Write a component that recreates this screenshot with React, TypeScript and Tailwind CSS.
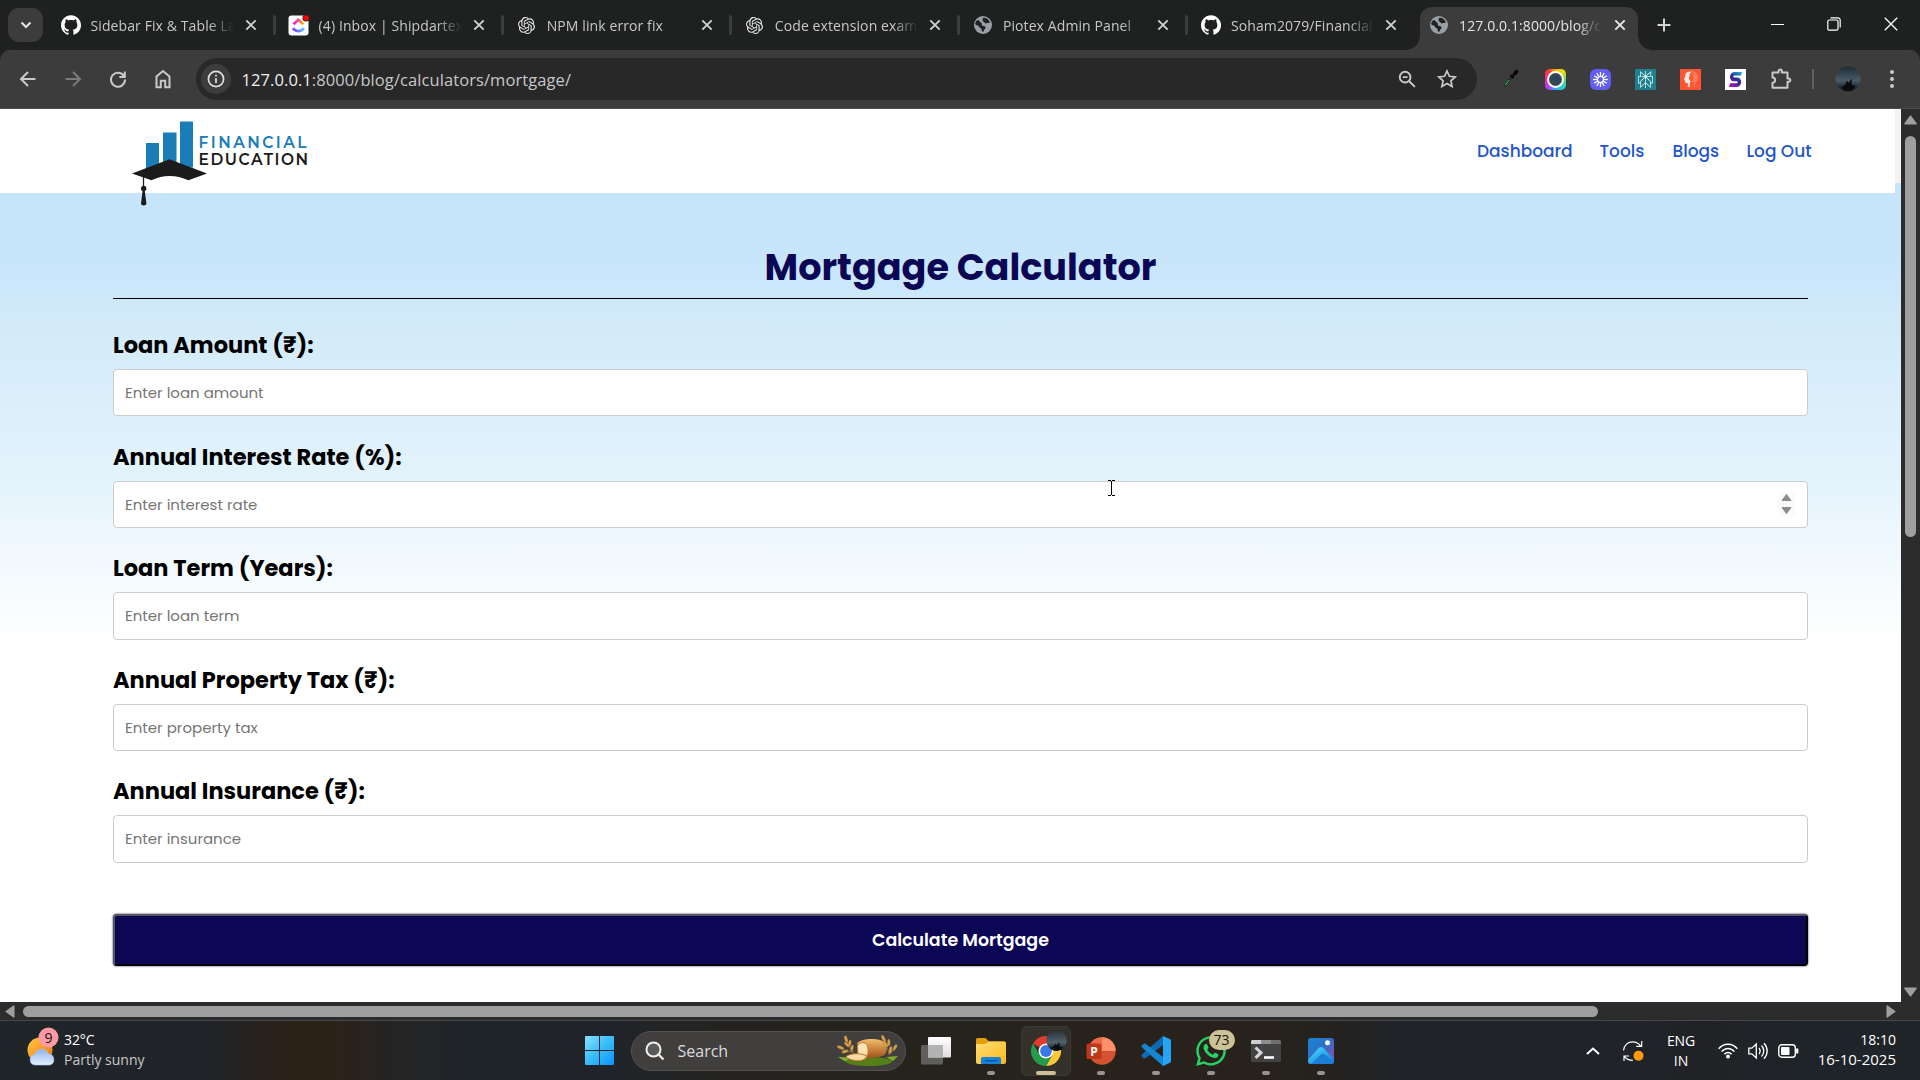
import type { ReactNode } from "react";
import { SiGithub, SiOpenai, SiPerplexity } from "react-icons/si";
import { FaWhatsapp } from "react-icons/fa";

const POPPINS = "font-[Poppins,Inter,sans-serif]";

/* ---------- tab strip ---------- */

function Globe() {
  return (
    <svg viewBox="0 0 20 20" className="size-5">
      <circle cx="10" cy="10" r="9" fill="#9aa0a6" />
      <path d="M4 5.500c1.200-.6 2.500 0 2.800 1 .3 1 1.700.8 2 1.900.2 1-.6 1.700.4 2.200 1.400.7 3.100.5 3.300 1.900.2 1.300-1.300 1.600-1.600 2.900-.2 1-1 1.700-1.800 1.100-.7-.6-.2-2-.9-2.900-.8-1-2.200-1.100-2.600-2.400C5.200 9.900 3 10.600 2.300 9.300 2 8 2.800 6.500 4 5.500z" fill="#202222" />
      <path d="M10.500 2.800c1.900-.4 4.200.8 5 2.300.5 1 1.500 1.700 1 2.600-.6.8-1.600-.1-2.500.3-.9.500-1.900.6-2.300-.3-.3-.9-1.600-.8-1.900-1.800-.3-1.200-.3-2.700.7-3.100z" fill="#202222" />
    </svg>
  );
}

function ClickUpIcon() {
  return (
    <svg viewBox="0 0 21 21" className="size-[21px] overflow-visible">
      <defs>
        <linearGradient id="cuTop" x1="0" x2="1"><stop offset="0" stopColor="#ff02f0" /><stop offset="1" stopColor="#ffb000" /></linearGradient>
        <linearGradient id="cuBot" x1="0" x2="1"><stop offset="0" stopColor="#8930fd" /><stop offset="1" stopColor="#49ccf9" /></linearGradient>
      </defs>
      <rect x="0.500" y="0.500" width="20" height="20" rx="3" fill="#fff" />
      <path d="M5.500 9.200l5-4.400 5 4.400" fill="none" stroke="url(#cuTop)" strokeWidth="2.700" />
      <path d="M5 13.200c3 3.900 8 3.900 11 0" fill="none" stroke="url(#cuBot)" strokeWidth="2.700" />
      <circle cx="18" cy="3" r="3.600" fill="#202222" />
      <circle cx="18" cy="3" r="2.800" fill="#f00" />
    </svg>
  );
}

function Cross({ className }: { className: string }) {
  return (
    <svg viewBox="0 0 16 16" className={className} fill="none" stroke="currentColor" strokeWidth="1.900">
      <path d="M3.300 3.300l9.400 9.400M12.700 3.300l-9.400 9.400" />
    </svg>
  );
}

const TABS: { title: string; icon: ReactNode; active?: boolean; sep?: boolean }[] = [
  { title: "Sidebar Fix & Table La", icon: <SiGithub className="size-5 text-white" />, sep: true },
  { title: "(4) Inbox | Shipdartex", icon: <ClickUpIcon />, sep: true },
  { title: "NPM link error fix", icon: <SiOpenai className="size-[17px] text-[#e8e8e8]" />, sep: true },
  { title: "Code extension exam", icon: <SiOpenai className="size-[17px] text-[#e8e8e8]" />, sep: true },
  { title: "Piotex Admin Panel", icon: <Globe />, sep: true },
  { title: "Soham2079/Financial", icon: <SiGithub className="size-5 text-white" /> },
  { title: "127.0.0.1:8000/blog/c", icon: <Globe />, active: true },
];

function TabStrip() {
  return (
    <div className="flex h-[50px] shrink-0 items-start bg-[#1f2121] pl-2">
      <div className="mt-2 mr-[6px] flex h-[34px] w-[35px] shrink-0 items-center justify-center rounded-[11px] bg-[#3c3c3c]">
        <svg viewBox="0 0 12 12" className="size-3" fill="none" stroke="#e3e3e3" strokeWidth="2"><path d="M1.500 3.500L6 8l4.500-4.500" /></svg>
      </div>
      {TABS.map((t) => (
        <div key={t.title} className="relative h-[50px] w-[228.100px] shrink-0">
          {t.active && (
            <>
              <div className="absolute top-[7px] left-[2px] h-[43px] w-[218px] rounded-t-[12px] bg-[#3c3c3c]" />
              <div className="absolute bottom-0 -left-[12px] size-[14px] bg-[radial-gradient(circle_at_0_0,transparent_13.500px,#3c3c3c_14px)]" />
              <div className="absolute bottom-0 left-[220px] size-[14px] bg-[radial-gradient(circle_at_100%_0,transparent_13.500px,#3c3c3c_14px)]" />
            </>
          )}
          <div className="relative flex h-[50px] items-center pl-[11.500px]">
            <div className="flex w-5 shrink-0 justify-center">{t.icon}</div>
            <div
              className={`ml-[10px] w-[143px] shrink-0 pt-px text-[14px] leading-5 tracking-[0.100px] whitespace-nowrap [mask-image:linear-gradient(90deg,#000_118px,transparent_143px)] ${t.active ? "text-[#e3e3e3]" : "text-[#c7c7c7]"}`}
            >
              {t.title}
            </div>
            <Cross className={`ml-[9.500px] size-4 shrink-0 ${t.active ? "text-[#e8e8e8]" : "text-[#d0d0d0]"}`} />
            {t.sep && <div className="ml-[14px] h-5 w-[3px] rounded bg-[#3c3e3e]" />}
          </div>
        </div>
      ))}
      <div className="flex h-[50px] w-[42px] items-center">
        <svg viewBox="0 0 14 14" className="ml-[11.500px] size-[14px]" stroke="#d4d4d4" strokeWidth="2"><path d="M7 .5v13M.5 7h13" /></svg>
      </div>
      <div className="ml-auto flex h-[48px] text-white">
        <div className="flex w-[57px] items-center justify-center pl-[2px]"><div className="h-px w-[13px] bg-white" /></div>
        <div className="flex w-[57px] items-center justify-center">
          <svg viewBox="0 0 14 14" className="size-[14px]" fill="none" stroke="#fff" strokeWidth="1.200">
            <rect x="0.800" y="3" width="10.200" height="10.200" rx="1.500" />
            <path d="M3.500.8h7.200a2.500 2.500 0 0 1 2.500 2.500v7.200" />
          </svg>
        </div>
        <div className="flex w-[58px] items-center justify-center">
          <svg viewBox="0 0 14 14" className="size-[14px]" stroke="#fff" strokeWidth="1.300"><path d="M.8.8l12.400 12.400M13.200.8L.8 13.200" /></svg>
        </div>
      </div>
    </div>
  );
}

/* ---------- address bar row ---------- */

function Slot({ children }: { children: ReactNode }) {
  return <div className="flex w-[45px] shrink-0 items-center justify-center">{children}</div>;
}

const LINE = { fill: "none", stroke: "currentColor", strokeWidth: 2 } as const;
const RAYS = [0, 30, 60, 90, 120, 150, 180, 210, 240, 270, 300, 330];

function Toolbar() {
  return (
    <div className="flex h-[59px] shrink-0 items-center rounded-t-[10px] border-b border-[#4c4c4c] bg-[#3c3c3c] pl-[5px] text-[#c9c9c9]">
      <Slot><svg viewBox="0 0 18 18" className="size-[18px]" {...LINE}><path d="M16.500 9H2.500M9 2L2 9l7 7" /></svg></Slot>
      <Slot><svg viewBox="0 0 18 18" className="size-[18px] text-[#7b7b7b]" {...LINE}><path d="M1.500 9h14M9 2l7 7-7 7" /></svg></Slot>
      <Slot>
        <svg viewBox="0 0 18 18" className="size-[18px]" {...LINE}><path d="M15.200 6.500A7 7 0 1 0 16 9.500M15.800 1.500v5.500h-5.500" /></svg>
      </Slot>
      <Slot>
        <svg viewBox="0 0 18 20" className="h-5 w-[18px]" {...LINE}><path d="M2.500 18.200V7.500L9 2l6.500 5.500v10.700h-4.300v-6.500H6.800v6.500z" /></svg>
      </Slot>
      <div className="ml-[11px] flex h-[42px] w-[1281px] shrink-0 items-center rounded-full bg-[#282828] pl-[5px]">
        <div className="flex size-[30px] items-center justify-center rounded-full bg-[#3d3d3d]">
          <svg viewBox="0 0 18 18" className="size-[18px] text-[#e0e0e0]" {...LINE} strokeWidth="1.700"><circle cx="9" cy="9" r="7.600" /><path d="M9 8v5M9 4.700v1.800" /></svg>
        </div>
        <div className="ml-[10.500px] pt-px text-[16.500px] leading-6 tracking-[0.080px] text-[#c7c7c7]">
          <span className="text-[#f0f0f0]">127.0.0.1</span>:8000/blog/calculators/mortgage/
        </div>
        <svg viewBox="0 0 20 20" className="ml-auto size-[19px]" {...LINE}><circle cx="7.500" cy="7.500" r="5.600" /><path d="M11.800 11.800l6 6M5 7.500h5" /></svg>
        <svg viewBox="0 0 20 20" className="mr-5 ml-[20px] size-[20px]" {...LINE} strokeWidth="1.700"><path d="M10 2l2.400 5.300 5.800.6-4.300 3.900 1.200 5.700L10 14.600l-5.100 2.900 1.200-5.700-4.300-3.900 5.800-.6z" /></svg>
      </div>
      <div className="w-[11px]" />
      <Slot>
        <svg viewBox="0 0 20 20" className="size-5">
          <path d="M2.800 18.800l.8-3.300 6-7.700 1.600 1.200-6 7.700z" fill="#10351a" />
          <path d="M4.200 16.200l4-5.200" stroke="#4cc765" strokeWidth="1" />
          <path d="M9.200 6.300l3.600 2.700M11.500 7.300l3.500-4.500" stroke="#050505" strokeWidth="1.900" />
          <ellipse cx="14.800" cy="3.500" rx="1.900" ry="3" transform="rotate(38 14.800 3.500)" fill="#050505" />
        </svg>
      </Slot>
      <Slot>
        <div className="flex size-[21px] items-center justify-center rounded-[5px] bg-[conic-gradient(#ffb400,#f7e200_12%,#4fdc6a_25%,#22d3c5_38%,#2ba8ff_50%,#b43cff_62%,#ff1fa8_75%,#ff3b3b_90%,#ffb400)]">
          <div className="flex size-[17px] items-center justify-center rounded-full bg-white"><div className="flex size-[13px] items-center justify-center rounded-full bg-[#3b4653]"><div className="size-[6px] rounded-full bg-[#24465e]" /></div></div>
        </div>
      </Slot>
      <Slot>
        <svg viewBox="0 0 21 21" className="size-[21px]">
          <rect width="21" height="21" rx="6" fill="#625df5" />
          {RAYS.map((a) => (
            <path key={a} d="M10.500 3v4.800" stroke="#fff" strokeWidth="1.300" transform={`rotate(${a} 10.500 10.500)`} />
          ))}
          <circle cx="10.500" cy="10.500" r="3" fill="none" stroke="#fff" strokeWidth="1.100" />
        </svg>
      </Slot>
      <Slot><div className="flex size-[21px] items-center justify-center bg-[#1f808d]"><SiPerplexity className="size-[17px] text-[#d6eef0]" /></div></Slot>
      <Slot>
        <svg viewBox="0 0 21 21" className="size-[21px]">
          <rect width="21" height="21" fill="#ff5533" />
          <path d="M11.500 2.800C8 2 5.200 4 5.200 7c0 1.500-1.200 2.600-1.200 3.400 0 .6 1 .5 1 1.100 0 1.300-.2 2.500 1.600 2.500 1 0 1.500.3 1.400 1.500L7.500 17.500l2.300.8c-.3-2.400.4-4.300.9-6.300-1.500-1-2.300-2.400-1.400-4 .8-1.300-.3-2.200.6-3.400.5-.7 1-1.100 1.600-1.800z" fill="#ffe9e2" />
          <path d="M11.500 2.800c4.500.2 6 3.700 5.300 7-.6 2.700-2.500 3.700-2.300 8M12.500 5.500c2 1.500 2 5 0 7.500M14.500 5c1.300 2.500 1 5-.8 8" fill="none" stroke="#ffc3b3" strokeWidth="0.900" strokeDasharray="1.300 0.900" />
        </svg>
      </Slot>
      <Slot>
        <svg viewBox="0 0 21 21" className="size-[21px]">
          <defs><linearGradient id="sMark" x1="0.800" y1="0" x2="0.200" y2="1"><stop offset="0" stopColor="#16a8d8" /><stop offset="0.450" stopColor="#2a2a8c" /><stop offset="1" stopColor="#a417b8" /></linearGradient></defs>
          <rect width="21" height="21" fill="#fff" />
          <path d="M17 3l-1 3.600H9.200c-1.200 0-1.200 1.900 0 1.900h3.300c5 0 5 9.500-.8 9.500H4l1-3.700h6.800c1.300 0 1.300-2 0-2H8.600C3.500 12.300 4 3 9.200 3z" fill="url(#sMark)" />
        </svg>
      </Slot>
      <Slot>
        <svg viewBox="0 0 22 22" className="size-[22px]" {...LINE}><path d="M2.500 4.500h6V3.300a1.700 1.700 0 0 1 3.400 0v1.200h5.600v6h1.200a1.600 1.600 0 0 1 0 3.200h-1.200v6h-15v-5c3.500 0 3.500-5.200 0-5.200z" strokeLinejoin="round" /></svg>
      </Slot>
      <div className="ml-[9px] h-5 w-[2px] bg-[#5f6060]" />
      <svg viewBox="0 0 26 26" className="ml-[21px] size-[26px]">
        <defs><linearGradient id="avatar" x1="0" y1="0" x2="0" y2="1"><stop offset="0" stopColor="#1d2a33" /><stop offset="0.550" stopColor="#4a5c68" /><stop offset="0.750" stopColor="#2b3740" /><stop offset="1" stopColor="#0b0f13" /></linearGradient></defs>
        <circle cx="13" cy="13" r="12.500" fill="url(#avatar)" />
        <path d="M6 21.500l4-2.500 2-4.500 1.500 2.500 3.500-4.500-.5 6 4 1.500-3 4h-8z" fill="#080b0e" />
      </svg>
      <div className="ml-[29px] flex flex-col gap-[3px]">
        <div className="size-1 rounded-full bg-[#c9c9c9]" /><div className="size-1 rounded-full bg-[#c9c9c9]" /><div className="size-1 rounded-full bg-[#c9c9c9]" />
      </div>
    </div>
  );
}

/* ---------- web page ---------- */

function Logo() {
  return (
    <div className="relative z-10 flex items-start pt-3 pl-[132px]">
      <svg viewBox="0 0 76 86" className="h-[86px] w-[76px] shrink-0">
        <path d="M14 22h13v26H14zM31 11.500h13.500V44H31zM48 .5h13v46H48z" fill="#1a7db8" />
        <path d="M0 52.500L37.500 38.300 75 52.500l-18.500 6.800C44 53.500 31 53.500 19.500 59.300z" fill="#1b1b1b" />
        <path d="M11.500 56v12" stroke="#1b1b1b" strokeWidth="1.300" />
        <circle cx="11.700" cy="67.500" r="2.700" fill="#1b1b1b" />
        <path d="M10.700 69h2l1.700 13.500c0 2.500-5.400 2.500-5.400 0z" fill="#1b1b1b" />
      </svg>
      <div className="-ml-[9.500px] flex flex-col pt-[12.500px] font-[Montserrat,Lato,sans-serif] text-[15.500px] leading-[17px] font-semibold">
        <span className="tracking-[2.450px] text-[#1a7db8]">FINANCIAL</span>
        <span className="tracking-[1.550px] text-[#1b1b1b]">EDUCATION</span>
      </div>
    </div>
  );
}

function Navbar() {
  return (
    <nav className="flex h-[84px] w-[1895px] shrink-0 justify-between bg-white">
      <Logo />
      <div className={`flex h-[84px] items-center gap-7 pt-[2px] pr-[84px] text-[17px] font-medium text-[#1f56c8] ${POPPINS}`}>
        <a className="w-[94.500px]">Dashboard</a>
        <a className="w-[45px]">Tools</a>
        <a className="w-[46px]">Blogs</a>
        <a className="w-[64.500px] whitespace-nowrap">Log Out</a>
      </div>
    </nav>
  );
}

const FIELDS = [
  { label: "Loan Amount (₹):", hint: "Enter loan amount" },
  { label: "Annual Interest Rate (%):", hint: "Enter interest rate", spin: true },
  { label: "Loan Term (Years):", hint: "Enter loan term" },
  { label: "Annual Property Tax (₹):", hint: "Enter property tax" },
  { label: "Annual Insurance (₹):", hint: "Enter insurance" },
];

function Page() {
  return (
    <div className="flex w-[1901px] flex-col bg-[linear-gradient(180deg,#c6e5fa_84px,#c6e5fa_130px,#cbe7fb_182px,#d0e9f8_195px,#e3f3fc_370px,#eef7fe_422px,#f1f9fd_450px,#ffffff_535px)]">
      <div className="flex h-[84px] shrink-0">
        <Navbar />
        <div className="h-[74px] w-[6px] bg-[#f3f3f3]" />
      </div>
      <main className={`ml-[113px] flex w-[1695px] flex-col pt-[45px] text-black ${POPPINS}`}>
        <h1 className="h-[61px] border-b border-black text-center text-[36.600px] leading-[60px] font-bold text-[#0b0755]">Mortgage Calculator</h1>
        <form className="flex flex-col pt-[26px]">
          {FIELDS.map((f) => (
            <div key={f.label} className="h-[111.600px]">
              <label className="block h-[44px] text-[22.500px] leading-[41px] font-bold">{f.label}</label>
              <div className="flex h-[47.400px] items-center rounded-[4px] border border-[#ccc] bg-white pr-3 pl-[11px]">
                <input placeholder={f.hint} className="min-w-0 flex-1 pt-[1px] text-[15px] outline-none placeholder:text-[#757575]" />
                {f.spin && (
                  <svg viewBox="0 0 17 22" className="h-[22px] w-[17px] bg-[#fafafa]" fill="#8b8b8b">
                    <path d="M8.500 1.500L13 7.500H4zM8.500 20.500L4 14.500h9z" stroke="#8b8b8b" strokeLinejoin="round" />
                  </svg>
                )}
              </div>
            </div>
          ))}
          <button type="button" className="mt-[30.600px] h-[52.500px] rounded-[4px] border-2 border-[#000] border-t-[#55555f] border-l-[#55555f] bg-[#0b0755] text-[17.400px] font-semibold text-white shadow-[0_0_2px_#0b0755]">
            Calculate Mortgage
          </button>
        </form>
      </main>
    </div>
  );
}

function VerticalScrollbar() {
  return (
    <div className="flex w-[19px] flex-col items-center bg-[#2c2c2c] pt-[6px] pb-[5px]">
      <svg viewBox="0 0 13 10" className="h-[10px] w-[13px]"><path d="M6.500 1.200L12 8.800H1z" fill="#9f9f9f" stroke="#9f9f9f" strokeLinejoin="round" strokeWidth="1.500" /></svg>
      <div className="mt-[11px] h-[401px] w-[11px] rounded-full bg-[#9f9f9f]" />
      <svg viewBox="0 0 13 10" className="mt-auto h-[10px] w-[13px]"><path d="M6.500 8.800L1 1.200h11z" fill="#9f9f9f" stroke="#9f9f9f" strokeLinejoin="round" strokeWidth="1.500" /></svg>
    </div>
  );
}

function HorizontalScrollbar() {
  return (
    <div className="flex h-[19px] shrink-0 items-center border-b border-[#47484a] bg-[#2c2c2c] pl-[5px]">
      <svg viewBox="0 0 10 13" className="h-[13px] w-[10px]"><path d="M1.200 6.500L8.800 1v11z" fill="#9f9f9f" stroke="#9f9f9f" strokeLinejoin="round" strokeWidth="1.500" /></svg>
      <div className="ml-2 h-[11px] w-[1575px] rounded-full bg-[#9f9f9f]" />
      <svg viewBox="0 0 10 13" className="mr-[24px] ml-auto h-[13px] w-[10px]"><path d="M8.800 6.500L1.200 1v11z" fill="#9f9f9f" stroke="#9f9f9f" strokeLinejoin="round" strokeWidth="1.500" /></svg>
    </div>
  );
}

/* ---------- taskbar ---------- */

function Weather() {
  return (
    <svg viewBox="0 0 32 40" className="h-10 w-8">
      <defs>
        <linearGradient id="sun" x1="0" y1="0" x2="1" y2="1"><stop offset="0" stopColor="#ffc93c" /><stop offset="1" stopColor="#f07018" /></linearGradient>
        <linearGradient id="cloud" x1="0" y1="0" x2="0" y2="1"><stop offset="0" stopColor="#8fb6f0" /><stop offset="1" stopColor="#e4efff" /></linearGradient>
      </defs>
      <circle cx="13" cy="23" r="12.500" fill="url(#sun)" />
      <path d="M8 38a5.300 5.300 0 0 1-.4-10.500A7.300 7.300 0 0 1 21.500 27a5.600 5.600 0 0 1 1.200 11z" fill="url(#cloud)" stroke="#a9c6f5" strokeWidth="0.600" />
      <circle cx="21.500" cy="10.500" r="10" fill="#ff99a4" />
      <text x="21.500" y="15.600" textAnchor="middle" fontSize="14" fill="#111" fontFamily="Open Sans, sans-serif">9</text>
    </svg>
  );
}

function Bread() {
  return (
    <svg viewBox="0 0 62 32" className="h-8 w-[62px]">
      <defs><linearGradient id="loaf" x1="0" y1="0" x2="0" y2="1"><stop offset="0" stopColor="#f3bd6a" /><stop offset="1" stopColor="#9f5218" /></linearGradient></defs>
      <ellipse cx="32" cy="26.500" rx="23" ry="4.500" fill="#557f18" />
      <path d="M1 22l14 .5-7 4zM61 21l-12 1 7 4z" fill="#7dad2c" />
      <path d="M20 8c6-5.500 24-5.500 28 0 2.500 4 2 9-.5 12-6 3-17 4-22 2.500z" fill="url(#loaf)" />
      <path d="M20.500 11c1.500-4.500 8.500-4.500 10 0 1 4 .8 8-.8 11-3 1-6 1-8.700-1z" fill="#fbe3b4" stroke="#c9792c" />
      <path d="M9 21.500c4-3 12-3.800 19-1.500l2 1c-1 3-5 5-10 4.800-5-.3-9-1.800-11-4.300z" fill="#f7dca6" stroke="#bf6f26" />
      <g stroke="#c08a3a" fill="#d9a552" strokeWidth="0.600">
        <path d="M16 18C13 13 11 9 9 3M17 17C12 17 6 15 1 12M52 20C51 13 49 8 46 2M52 20c3-3 5-6 7-10" fill="none" />
        <ellipse cx="9" cy="4" rx="1.300" ry="3.300" transform="rotate(-15 9 4)" /><ellipse cx="12.800" cy="8" rx="1.200" ry="3" transform="rotate(10 12.800 8)" /><ellipse cx="9.800" cy="9.500" rx="1.200" ry="3" transform="rotate(-45 9.800 9.500)" /><ellipse cx="15" cy="13" rx="1.200" ry="3" transform="rotate(10 15 13)" />
        <ellipse cx="3.500" cy="12.500" rx="1.200" ry="3.300" transform="rotate(-70 3.500 12.500)" /><ellipse cx="8" cy="16.500" rx="1.200" ry="3.300" transform="rotate(-105 8 16.500)" />
        <ellipse cx="46.500" cy="3.500" rx="1.300" ry="3.500" transform="rotate(-25 46.500 3.500)" /><ellipse cx="48.500" cy="9" rx="1.300" ry="3.500" transform="rotate(-40 48.500 9)" /><ellipse cx="51.800" cy="7.500" rx="1.200" ry="3.200" transform="rotate(0 51.800 7.500)" /><ellipse cx="53.500" cy="15" rx="1.300" ry="3.500" transform="rotate(10 53.500 15)" /><ellipse cx="58" cy="12.500" rx="1.200" ry="3.200" transform="rotate(30 58 12.500)" />
      </g>
    </svg>
  );
}

function AppButton({ children, running, active }: { children: ReactNode; running?: boolean; active?: boolean }) {
  return (
    <div className="flex w-[55px] justify-center">
      <div className={`relative flex size-[50px] items-center justify-center rounded-[6px] ${active ? "border border-[#3d3933] bg-[#34302a]" : ""}`}>
        {children}
        {running && <div className="absolute bottom-[1px] h-1 w-2 rounded-full bg-[#979594]" />}
        {active && <div className="absolute bottom-0 h-1 w-5 rounded-full bg-[#cdbf94]" />}
      </div>
    </div>
  );
}

function Taskbar() {
  return (
    <div className="flex h-[59px] shrink-0 bg-[linear-gradient(90deg,#20252a_0px,#20242a_200px,#2d2217_300px,#2d2217_330px,#262422_380px,#20252a_470px,#20242a_600px,#25231f_740px,#26231c_980px,#2a221c_1200px,#24221f_1340px,#20242a_1400px,#20242a_1600px,#212226_1700px,#1f2428_1800px,#1f2428_1920px)] text-white">
      <div className="flex w-[572px] pt-[6px] pl-[27px]">
        <Weather />
        <div className="ml-[5px] flex flex-col pt-[3px] text-[14px] leading-5">
          <span className="tracking-[-0.100px]">32°C</span>
          <span className="text-[#c8c8c8]">Partly sunny</span>
        </div>
      </div>
      <div className="flex items-center">
        <div className="flex w-[55px] justify-center">
          <svg viewBox="0 0 29 29" className="size-[29px]">
            <defs><linearGradient id="win" x1="0" y1="0" x2="1" y2="1"><stop offset="0" stopColor="#8be0ff" /><stop offset="0.500" stopColor="#37bdfa" /><stop offset="1" stopColor="#0a93ff" /></linearGradient></defs>
            <path d="M1 0h13v14H0V1a1 1 0 0 1 1-1zM15 0h13a1 1 0 0 1 1 1v13H15zM0 15h14v14H1a1 1 0 0 1-1-1zM15 15h14v13a1 1 0 0 1-1 1H15z" fill="url(#win)" />
          </svg>
        </div>
        <div className="ml-1 flex h-10 w-[275px] items-center rounded-full border border-[#535251] bg-[#413f3e] pl-[13px]">
          <svg viewBox="0 0 20 20" className="size-5" fill="#5b5a59" stroke="#f0f0f0" strokeWidth="2"><circle cx="8.500" cy="8.500" r="7" /><path d="M13.500 13.500l5 5" strokeWidth="2.400" /></svg>
          <span className="ml-[12.500px] text-[16px] text-[#dcdcdc]">Search</span>
          <div className="mr-[6px] ml-auto"><Bread /></div>
        </div>
        <div className="w-[2px]" />
        <AppButton>
          <svg viewBox="0 0 30 28" className="h-7 w-[30px]">
            <defs><linearGradient id="tv" x1="0" y1="0" x2="0" y2="1"><stop offset="0" stopColor="#fff" /><stop offset="1" stopColor="#ddd" /></linearGradient></defs>
            <rect x="0" y="8" width="22" height="19.500" rx="1" fill="#5f5e5d" />
            <rect x="7" y="0" width="23" height="20.500" rx="1" fill="url(#tv)" />
            <path d="M7 8h15v12.500H7z" fill="#b2b2b2" />
          </svg>
        </AppButton>
        <AppButton running>
          <svg viewBox="0 0 30 26" className="h-[26px] w-[30px]">
            <defs><linearGradient id="fold" x1="0" y1="0" x2="1" y2="1"><stop offset="0" stopColor="#ffde76" /><stop offset="1" stopColor="#fbb81c" /></linearGradient></defs>
            <path d="M0 1.500A1.500 1.500 0 0 1 1.500 0h8l3.500 3.500h15a2 2 0 0 1 2 2V12H0z" fill="#e19f0c" />
            <path d="M0 6h9l4-2.500h15a2 2 0 0 1 2 2V24a2 2 0 0 1-2 2H2a2 2 0 0 1-2-2z" fill="url(#fold)" />
            <path d="M5 26v-5a2 2 0 0 1 2-2h16a2 2 0 0 1 2 2v5z" fill="#1583d8" />
            <path d="M9 22.800h12" stroke="#0b52a0" strokeWidth="1.300" />
          </svg>
        </AppButton>
        <AppButton active>
          <svg viewBox="0 0 30 30" className="size-[30px] overflow-visible">
            <path d="M15 15L2 7.500A15 15 0 0 1 28 7.500z" fill="#e33b2e" />
            <path d="M15 7.500h13A15 15 0 0 1 15 30l6.500-11.200z" fill="#fcc934" />
            <path d="M2 7.500l6.500 11.300A7.500 7.500 0 0 0 21.500 18.800L15 30A15 15 0 0 1 2 7.500z" fill="#239d4b" />
            <circle cx="15" cy="15" r="7.500" fill="#fff" /><circle cx="15" cy="15" r="5.900" fill="#3b78e7" />
            <defs><linearGradient id="mini" x1="0" y1="0" x2="0" y2="1"><stop offset="0" stopColor="#25323a" /><stop offset="0.600" stopColor="#53616a" /><stop offset="1" stopColor="#0b0f13" /></linearGradient></defs>
            <circle cx="25.500" cy="4.500" r="10.300" fill="url(#mini)" />
            <path d="M19 12.500l4-2.500 1.500-2.500 1 2 3-3.500v4.500l3.500 1c-3 4-9 4.500-13 1z" fill="#0b0e11" />
          </svg>
        </AppButton>
        <AppButton running>
          <svg viewBox="0 0 30 30" className="size-[30px]">
            <circle cx="16" cy="15" r="13.700" fill="#d35230" /><path d="M16 1.300A13.700 13.700 0 0 1 29.700 15H16z" fill="#ff8f6b" /><path d="M16 1.300V15H2.300A13.700 13.700 0 0 1 16 1.300z" fill="#ed6c47" />
            <rect x="0.500" y="7.500" width="15" height="15.500" rx="1.500" fill="#bf3719" />
            <text x="8" y="19.700" textAnchor="middle" fontSize="12" fontWeight="700" fill="#fff" fontFamily="Open Sans, sans-serif">P</text>
          </svg>
        </AppButton>
        <AppButton running>
          <svg viewBox="0 0 30 30" className="size-[30px]">
            <path d="M22 0L1 18.600c-.7.600-.7 1.500 0 2.100l1.800 1.500c.5.400 1.200.4 1.700.1L24 7.500z" fill="#0b6bb3" />
            <path d="M22 30L1 11.400c-.7-.6-.7-1.500 0-2.100l1.800-1.500c.5-.4 1.200-.4 1.700-.1L24 22.500z" fill="#1585d2" />
            <path d="M22 0l7 3.300c.6.300 1 .9 1 1.500v20.400c0 .6-.4 1.200-1 1.500L22 30z" fill="#25a5f3" />
          </svg>
        </AppButton>
        <AppButton running>
          <FaWhatsapp className="size-[34px] shrink-0 text-[#25d366]" />
          <div className="absolute top-[4px] left-[23px] flex h-5 w-[26px] items-center justify-center rounded-full bg-[#cdc296] text-[14px] leading-none text-[#151310]">73</div>
        </AppButton>
        <AppButton running>
          <svg viewBox="0 0 30 22" className="h-[22px] w-[30px]">
            <rect width="30" height="22" rx="1.500" fill="#434343" /><path d="M0 1.500A1.500 1.500 0 0 1 1.500 0H10v4H0z" fill="#cfcfcf" /><path d="M10 0h10v4H10z" fill="#8e8e8e" /><path d="M20 0h8.500A1.500 1.500 0 0 1 30 1.500V4H20z" fill="#6e6e6e" />
            <path d="M4.500 7.500l5.500 5.200-5.500 5.200" fill="none" stroke="#d5d5d5" strokeWidth="3" /><path d="M13 17.500h10" stroke="#fff" strokeWidth="2.600" />
          </svg>
        </AppButton>
        <AppButton running>
          <svg viewBox="0 0 26 26" className="size-[26px]">
            <defs>
              <linearGradient id="ph" x1="0" y1="0" x2="1" y2="1"><stop offset="0" stopColor="#1687d9" /><stop offset="0.450" stopColor="#2f6fc8" /><stop offset="1" stopColor="#9b48a8" /></linearGradient>
              <linearGradient id="hill" x1="0" y1="0" x2="0.800" y2="1"><stop offset="0" stopColor="#4fe0ff" /><stop offset="1" stopColor="#1580dc" /></linearGradient>
              <clipPath id="phc"><rect width="26" height="26" rx="3" /></clipPath>
            </defs>
            <g clipPath="url(#phc)"><rect width="26" height="26" fill="url(#ph)" /><path d="M0 22L10.500 10.200c1.500-1.700 3.500-1.700 5 0L26 21v5H0z" fill="url(#hill)" /><path d="M3 26l10-9.500c1.200-1.100 2.500-1.100 3.700 0L26 25v1z" fill="#1a7fd6" /></g>
            <circle cx="19.500" cy="4.700" r="2.500" fill="#fff" />
          </svg>
        </AppButton>
      </div>
      <div className="ml-auto flex items-center pr-6 text-[14px] leading-5">
        <svg viewBox="0 0 14 8" className="h-2 w-[14px]" fill="none" stroke="#fff" strokeWidth="2"><path d="M1 7l6-5.500L13 7" /></svg>
        <svg viewBox="0 0 22 22" className="ml-[22px] size-[22px]" fill="none" stroke="#fff" strokeWidth="1.200">
          <path d="M1.500 10.500C2 5 6 1.800 10.500 1.800c4 0 6.500 1.700 8.700 4.500M19.700 1v5.300h-5.500M2 21v-5h5M2.300 16.300c2 2.700 5 4 8.500 4" />
          <circle cx="16.500" cy="15.800" r="5" fill="#ff9a0b" stroke="none" />
        </svg>
        <div className="ml-[21px] flex w-8 flex-col items-center"><span className="tracking-[-0.100px]">ENG</span><span>IN</span></div>
        <svg viewBox="0 0 20 16" className="ml-[21px] h-4 w-5" fill="none" stroke="#fff" strokeWidth="1.500">
          <path d="M.7 5.800C5.500-.4 14.500-.4 19.300 5.800M3.600 8.600c3.500-4.300 9.300-4.300 12.800 0M6.400 11.200c2-2.300 5.200-2.300 7.200 0" /><circle cx="10" cy="13.600" r="2" fill="#fff" stroke="none" />
        </svg>
        <svg viewBox="0 0 20 18" className="ml-[10px] h-[18px] w-5" fill="none" stroke="#fff" strokeWidth="1.300">
          <path d="M.8 6.200h3L8.300 2v14l-4.500-4.200h-3zM11 6c1.300 1.700 1.300 4.300 0 6M13.500 3.500c3 3.200 3 7.800 0 11M16 1.300c4.200 4.500 4.200 11 0 15.400" />
        </svg>
        <svg viewBox="0 0 21 14" className="ml-[10px] h-[14px] w-[21px]" fill="none" stroke="#fff" strokeWidth="1.400">
          <rect x="0.800" y="0.800" width="16.500" height="12.400" rx="3" /><rect x="3" y="3" width="8.500" height="8" rx="1" fill="#fff" stroke="none" /><path d="M19.200 4.500v5" strokeWidth="2.200" />
        </svg>
        <div className="-mt-[2px] ml-[15px] flex w-[82px] flex-col items-end"><span>18:10</span><span className="-mt-px text-[15px]">16-10-2025</span></div>
      </div>
    </div>
  );
}

export default function App() {
  return (
    <div className="relative flex h-[1080px] w-[1920px] flex-col overflow-hidden bg-[#1f2121] font-['Segoe_UI','Open_Sans',sans-serif]">
      <TabStrip />
      <Toolbar />
      <div className="flex h-[893px] shrink-0 bg-white">
        <Page />
        <VerticalScrollbar />
      </div>
      <HorizontalScrollbar />
      <Taskbar />
      <svg viewBox="0 0 7 16" className="absolute top-[480px] left-[1108px] h-4 w-[7px]" stroke="#000" fill="none"><path d="M0 .5h3M4 .5h3M3.500 1v14M0 15.500h3M4 15.500h3" shapeRendering="crispEdges" /></svg>
    </div>
  );
}
